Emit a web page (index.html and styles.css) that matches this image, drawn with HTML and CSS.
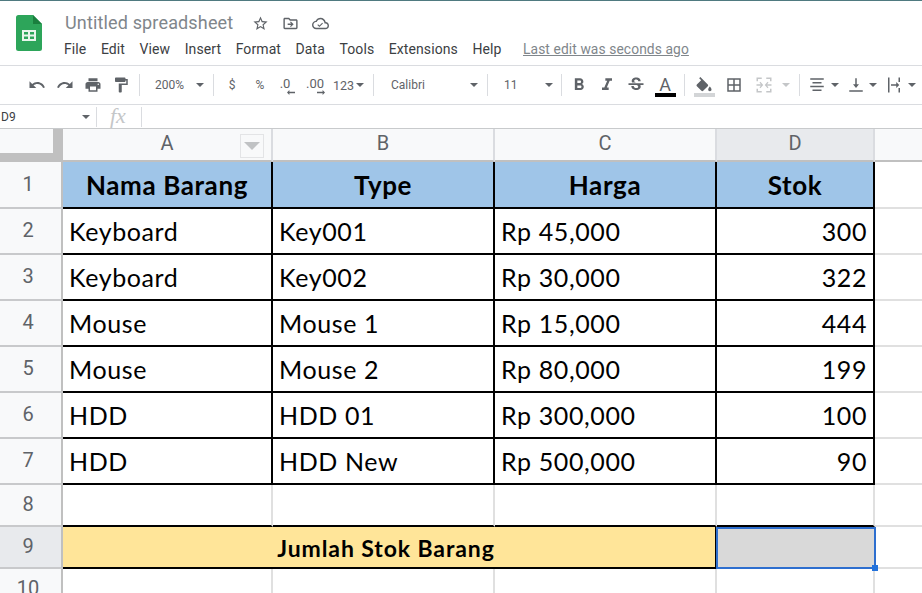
FILE: index.html
```html
<!DOCTYPE html>
<html lang="en">
<head>
<meta charset="utf-8">
<title>Untitled spreadsheet</title>
<link rel="stylesheet" href="styles.css">
</head>
<body>
<div class="app">
  <header class="topbar">
    <svg class="logo" viewBox="0 0 26 36"><path fill="#2da55a" d="M2.500 0H17l9 9v24.500a2.500 2.500 0 0 1-2.500 2.500h-21A2.500 2.500 0 0 1 0 33.500V2.500A2.500 2.500 0 0 1 2.500 0z"/><path fill="#1a7f3e" d="M17 0l9 9h-9z"/><path fill="#e8f5ec" d="M6 15h14v11H6zm2 2v2.500h4V17zm6 0v2.500h4V17zm-6 4.500V24h4v-2.500zm6 0V24h4v-2.500z" fill-rule="evenodd"/></svg>
    <div class="titles">
      <div class="title-row">
        <span class="doc-title">Untitled spreadsheet</span>
        <svg class="ticon first" viewBox="0 0 24 24"><path d="M22 9.240l-7.190-.62L12 2 9.190 8.630 2 9.240l5.460 4.730L5.820 21 12 17.270 18.180 21l-1.630-7.030L22 9.240zM12 15.400l-3.760 2.270 1-4.280-3.320-2.880 4.380-.38L12 6.100l1.710 4.040 4.380.38-3.320 2.880 1 4.280L12 15.400z"/></svg>
        <svg class="ticon" viewBox="0 0 24 24"><path d="M20 6h-8l-2-2H4c-1.100 0-2 .9-2 2v12c0 1.100.9 2 2 2h16c1.100 0 2-.9 2-2V8c0-1.100-.9-2-2-2zm0 12H4V6h5.170l2 2H20v10z"/><path d="M12.500 9l-1.200 1.200 1.800 1.800H8v2h5.100l-1.800 1.800 1.200 1.200 4-4z"/></svg>
        <svg class="ticon" viewBox="0 0 24 24"><path d="M19.350 10.040C18.670 6.590 15.640 4 12 4 9.110 4 6.600 5.640 5.350 8.040 2.340 8.360 0 10.910 0 14c0 3.310 2.690 6 6 6h13c2.760 0 5-2.240 5-5 0-2.640-2.050-4.780-4.650-4.960zM19 18H6c-2.210 0-4-1.790-4-4 0-2.050 1.530-3.760 3.560-3.970l1.070-.11.5-.95C8.080 7.140 9.940 6 12 6c2.620 0 4.880 1.860 5.390 4.430l.3 1.500 1.530.11c1.560.1 2.780 1.410 2.780 2.960 0 1.650-1.350 3-3 3zm-8.500-3.200l-1.900-1.900-1.100 1.100 3 3 5-5-1.100-1.100z"/></svg>
      </div>
      <nav class="menu">
        <span>File</span><span>Edit</span><span>View</span><span>Insert</span><span>Format</span><span>Data</span><span>Tools</span><span>Extensions</span><span>Help</span>
        <span class="last-edit">Last edit was seconds ago</span>
      </nav>
    </div>
  </header>

  <div class="toolbar">
    <div class="tb w28"><svg class="ic" viewBox="0 0 24 24"><path d="M12.500 8c-2.650 0-5.050.99-6.900 2.600L2 7v9h9l-3.620-3.620c1.390-1.160 3.160-1.880 5.120-1.880 3.540 0 6.550 2.310 7.600 5.500l2.370-.78C21.080 11.030 17.150 8 12.500 8z"/></svg></div>
    <div class="tb w28"><svg class="ic" viewBox="0 0 24 24"><path d="M18.400 10.600C16.550 8.990 14.150 8 11.500 8c-4.650 0-8.580 3.030-9.960 7.220L3.900 16c1.050-3.190 4.050-5.500 7.600-5.500 1.950 0 3.730.72 5.120 1.880L13 16h9V7l-3.600 3.600z"/></svg></div>
    <div class="tb w28"><svg class="ic" viewBox="0 0 24 24"><path d="M19 8H5c-1.660 0-3 1.340-3 3v6h4v4h12v-4h4v-6c0-1.660-1.340-3-3-3zm-3 11H8v-5h8v5zm3-7c-.55 0-1-.45-1-1s.45-1 1-1 1 .45 1 1-.45 1-1 1zm-1-9H6v4h12V3z"/></svg></div>
    <div class="tb w28"><svg class="ic" viewBox="0 0 24 24"><path d="M18 4V3c0-.55-.45-1-1-1H5c-.55 0-1 .45-1 1v4c0 .55.45 1 1 1h12c.55 0 1-.45 1-1V6h1v4H9v11c0 .55.45 1 1 1h2c.55 0 1-.45 1-1v-9h8V4h-3z"/></svg></div>
    <div class="sep w8"></div>
    <div class="tb w47 label pl12">200%</div>
    <div class="tb w19"><i class="caret"></i></div>
    <div class="sep w9"></div>
    <div class="tb w28 label">$</div>
    <div class="tb w28 label">%</div>
    <div class="tb w22 label stack"><b class="dec">.0</b><svg class="arr" viewBox="0 0 10 6"><path d="M0 3l3-3v2h7v2H3v2z"/></svg></div>
    <div class="tb w38 label stack"><b class="dec">.00</b><svg class="arr" viewBox="0 0 10 6"><path d="M10 3L7 0v2H0v2h7v2z"/></svg></div>
    <div class="tb w21 label num">123</div>
    <div class="tb w10"><i class="caret"></i></div>
    <div class="sep w16"></div>
    <div class="tb w84 label pl10">Calibri</div>
    <div class="tb w18"><i class="caret"></i></div>
    <div class="sep w8"></div>
    <div class="tb w49 label pl13">11</div>
    <div class="tb w17"><i class="caret"></i></div>
    <div class="sep w8"></div>
    <div class="tb w28"><svg class="ic big" viewBox="0 0 24 24"><path d="M15.600 10.790c.97-.67 1.650-1.770 1.650-2.790 0-2.260-1.750-4-4-4H7v14h7.040c2.090 0 3.710-1.700 3.710-3.790 0-1.520-.86-2.820-2.150-3.420zM10 6.500h3c.83 0 1.500.67 1.500 1.500s-.67 1.500-1.500 1.500h-3v-3zm3.500 9H10v-3h3.500c.83 0 1.500.67 1.500 1.500s-.67 1.500-1.500 1.500z"/></svg></div>
    <div class="tb w28"><svg class="ic big" viewBox="0 0 24 24"><path d="M10 4v3h2.210l-3.420 8H6v3h8v-3h-2.210l3.420-8H18V4z"/></svg></div>
    <div class="tb w30"><svg class="ic big" viewBox="0 0 24 24"><path d="M7.240 8.750c-.26-.48-.39-1.030-.39-1.670 0-.61.13-1.160.4-1.670.26-.5.63-.93 1.110-1.290.48-.35 1.050-.63 1.700-.83.66-.19 1.390-.29 2.180-.29.81 0 1.540.11 2.210.34.66.22 1.230.54 1.690.94.47.4.83.88 1.080 1.430.25.55.38 1.150.38 1.810h-3.010c0-.31-.05-.59-.15-.85-.09-.27-.24-.49-.44-.68-.2-.19-.45-.33-.75-.44-.3-.1-.66-.16-1.060-.16-.39 0-.74.04-1.030.13-.29.09-.53.21-.72.36-.19.16-.34.34-.44.55-.1.21-.15.43-.15.66 0 .48.25.88.74 1.210.38.25.77.48 1.410.7H7.390c-.05-.08-.11-.17-.15-.25zM21 12v-2H3v2h9.620c.18.07.4.14.55.2.37.17.66.34.87.51.21.17.35.36.43.57.07.2.11.43.11.69 0 .23-.05.45-.14.66-.09.2-.23.38-.42.53-.19.15-.42.26-.71.35-.29.08-.63.13-1.010.13-.43 0-.83-.04-1.180-.13s-.66-.23-.91-.42c-.25-.19-.45-.44-.59-.75-.14-.31-.25-.76-.25-1.210H6.400c0 .55.08 1.130.24 1.580.16.45.37.85.65 1.210.28.35.6.66.98.92.37.26.78.48 1.220.65.44.17.9.3 1.380.39.48.08.96.13 1.440.13.8 0 1.530-.09 2.180-.28s1.210-.45 1.670-.79c.46-.34.82-.77 1.070-1.270s.38-1.070.38-1.710c0-.6-.1-1.140-.31-1.610-.05-.11-.11-.23-.17-.33H21z"/></svg></div>
    <div class="tb w28 color-a"><span class="a-letter">A</span><i class="a-bar"></i></div>
    <div class="sep w11"></div>
    <div class="tb w28 color-a fill-wrap"><svg class="ic fill" viewBox="0 0 24 24"><path d="M16.560 8.940L7.620 0 6.210 1.410l2.380 2.380-5.150 5.150c-.59.59-.59 1.540 0 2.120l5.500 5.500c.29.29.68.44 1.060.44s.77-.15 1.060-.44l5.500-5.500c.59-.58.59-1.530 0-2.120z"/><path d="M19 11.500s-2 2.170-2 3.500c0 1.100.9 2 2 2s2-.9 2-2c0-1.330-2-3.500-2-3.500z"/></svg><i class="fill-bar"></i></div>
    <div class="tb w32"><svg class="ic" viewBox="0 0 24 24"><path d="M3 3v18h18V3H3zm8 16H5v-6h6v6zm0-8H5V5h6v6zm8 8h-6v-6h6v6zm0-8h-6V5h6v6z"/></svg></div>
    <div class="tb w28"><svg class="ic off" viewBox="0 0 24 24"><path d="M2 2h7v2H4v3H2zm13 0h7v5h-2V4h-5zM2 17h2v3h5v2H2zm18 0h2v5h-7v-2h5zM2 11h6l-2-2 1.200-1.200L11 12l-3.800 4.200L6 15l2-2H2zm20 0h-6l2-2-1.200-1.200L13 12l3.800 4.200L18 15l-2-2h6z"/></svg></div>
    <div class="tb w16"><i class="caret off"></i></div>
    <div class="sep w10"></div>
    <div class="tb w26"><svg class="ic" viewBox="0 0 24 24"><path d="M3 3h18v2H3zm3 5h12v2H6zm-3 5h18v2H3zm3 5h12v2H6z"/></svg></div>
    <div class="tb w9"><i class="caret"></i></div>
    <div class="tb w26 ml4"><svg class="ic" viewBox="0 0 24 24"><path d="M3 19h18v2H3zM11 3h2v8h3l-4 5-4-5h3z"/></svg></div>
    <div class="tb w8"><i class="caret"></i></div>
    <div class="tb w27 ml3"><svg class="ic" viewBox="0 0 24 24"><path d="M4 2h2v20H4zm14 0h2v6h-2zm0 14h2v6h-2zM8 11h7V8l4 4-4 4v-3H8z"/></svg></div>
    <div class="tb w10"><i class="caret"></i></div>
  </div>

  <div class="formula-bar">
    <div class="namebox"><span>D9</span><i class="caret"></i></div>
    <div class="fx">fx</div>
    <div class="formula-input"></div>
  </div>

  <main class="grid">
    <div class="corner"><div class="corner-inner"></div></div>
    <div class="colhead filtered">A<span class="filter"><i></i></span></div>
    <div class="colhead">B</div>
    <div class="colhead">C</div>
    <div class="colhead active">D</div>
    <div class="colhead"></div>

    <div class="rowhead">1</div>
    <div class="cell head">Nama Barang</div><div class="cell head">Type</div><div class="cell head">Harga</div><div class="cell head">Stok</div><div class="rest"></div>

    <div class="rowhead">2</div>
    <div class="cell">Keyboard</div><div class="cell">Key001</div><div class="cell">Rp 45,000</div><div class="cell right">300</div><div class="rest"></div>

    <div class="rowhead">3</div>
    <div class="cell">Keyboard</div><div class="cell">Key002</div><div class="cell">Rp 30,000</div><div class="cell right">322</div><div class="rest"></div>

    <div class="rowhead">4</div>
    <div class="cell">Mouse</div><div class="cell">Mouse 1</div><div class="cell">Rp 15,000</div><div class="cell right">444</div><div class="rest"></div>

    <div class="rowhead">5</div>
    <div class="cell">Mouse</div><div class="cell">Mouse 2</div><div class="cell">Rp 80,000</div><div class="cell right">199</div><div class="rest"></div>

    <div class="rowhead">6</div>
    <div class="cell">HDD</div><div class="cell">HDD 01</div><div class="cell">Rp 300,000</div><div class="cell right">100</div><div class="rest"></div>

    <div class="rowhead">7</div>
    <div class="cell">HDD</div><div class="cell">HDD New</div><div class="cell">Rp 500,000</div><div class="cell right">90</div><div class="rest"></div>

    <div class="rowhead">8</div>
    <div class="blank under"></div><div class="blank under"></div><div class="blank under"></div><div class="blank under"></div><div class="rest"></div>

    <div class="rowhead active">9</div>
    <div class="total">Jumlah Stok Barang</div>
    <div class="selected"><i class="handle"></i></div><div class="rest"></div>

    <div class="rowhead">10</div>
    <div class="blank"></div><div class="blank"></div><div class="blank"></div><div class="blank"></div><div class="rest"></div>
  </main>
</div>
</body>
</html>
```
FILE: styles.css
```css
* { box-sizing: border-box; }
html, body { margin: 0; height: 100%; overflow: hidden; background: #fff; }
.app { width: 922px; height: 593px; overflow: hidden; font-family: Roboto, "Liberation Sans", sans-serif; color: #3c4043; border-top: 1px solid #4f7a80; }

/* top bar */
.topbar { height: 65px; display: flex; border-bottom: 1px solid #dadce0; }
.logo { width: 26px; height: 36px; margin: 14px 0 0 16px; flex: none; }
.titles { margin-left: 23px; }
.title-row { display: flex; align-items: center; height: 20px; margin-top: 12px; }
.doc-title { font-size: 18px; color: #80868b; line-height: 20px; letter-spacing: .15px; }
.ticon { width: 17px; height: 17px; fill: #5f6368; margin-left: 13px; flex: none; }
.ticon.first { margin-left: 19px; }
.menu { display: flex; margin-top: 7px; margin-left: -1px; font-size: 14px; line-height: 18px; color: #3c4043; gap: 14.500px; white-space: nowrap; letter-spacing: .1px; }
.last-edit { margin-left: 7px; color: #80868b; text-decoration: underline; font-size: 13.800px; }

/* toolbar */
.toolbar { height: 39px; padding-left: 23px; display: flex; align-items: center; border-bottom: 1px solid #dadce0; }
.tb { height: 28px; display: flex; align-items: center; justify-content: center; flex: none; position: relative; }
.w8 { width: 8px; } .w9 { width: 9px; } .w10 { width: 10px; } .w11 { width: 11px; } .w16 { width: 16px; }
.w17 { width: 17px; } .w18 { width: 18px; } .w19 { width: 19px; } .w21 { width: 21px; } .w22 { width: 22px; }
.w26 { width: 26px; } .w27 { width: 27px; } .w28 { width: 28px; } .w30 { width: 30px; } .w32 { width: 32px; }
.w38 { width: 38px; } .w47 { width: 47px; } .w49 { width: 49px; } .w84 { width: 84px; }
.ml3 { margin-left: 3px; } .ml4 { margin-left: 4px; }
.ic { width: 18px; height: 18px; fill: #5f6368; }
.ic.big { width: 20px; height: 20px; }
.ic.off { fill: #c4c6c8; }
.label { font-size: 12px; color: #5f6368; justify-content: flex-start; }
.w28.label, .w22.label, .w38.label { justify-content: center; }
.pl10 { padding-left: 10px; } .pl12 { padding-left: 12px; } .pl13 { padding-left: 13px; }
.num { font-size: 12.500px; margin-left: -1px; margin-right: 1px; }
.sep { height: 22px; flex: none; display: flex; justify-content: center; }
.sep::before { content: ""; width: 1px; background: #dadce0; }
.caret { width: 0; height: 0; border-left: 4px solid transparent; border-right: 4px solid transparent; border-top: 4px solid #5f6368; display: block; flex: none; }
.caret.off { border-top-color: #c4c6c8; }
.label.stack { flex-direction: column; justify-content: flex-start; padding-top: 7px; }
.dec { font-weight: 400; font-size: 13px; line-height: 12px; }
.arr { width: 8px; height: 5px; fill: #5f6368; margin-left: 12px; }
.color-a { flex-direction: column; }
.a-letter { font-size: 18px; line-height: 17px; color: #5f6368; margin-top: 2px; }
.a-bar { width: 21px; height: 4px; background: #000; }
.fill-wrap { padding-top: 4px; }
.ic.fill { width: 20px; height: 20px; }
.fill-bar { width: 21px; height: 4px; background: #d3d5d7; margin-top: -4px; }

/* formula bar */
.formula-bar { height: 24px; display: flex; align-items: center; border-bottom: 1px solid #c8cacc; }
.namebox { width: 97px; height: 20px; padding: 0 6px 0 1px; display: flex; justify-content: space-between; align-items: center; font-size: 12px; color: #3c4043; border-right: 1px solid #dadce0; }
.fx { width: 45px; height: 20px; padding-left: 13px; font: italic 22px/18px "Liberation Serif", serif; color: #c4c6c8; border-right: 1px solid #dadce0; }
.formula-input { flex: 1; }

/* grid */
.grid { display: grid; grid-template-columns: 63px 210px 222px 222px 158px 1fr; grid-template-rows: 33px 47px repeat(6, 46px) 42px 42px 42px; }
.corner { background: #f8f9fa; border-right: 2px solid #c0c0c0; border-bottom: 2px solid #c0c0c0; }
.corner-inner { box-sizing: content-box; width: 53px; height: 24px; border-right: 8px solid #c0c0c0; border-bottom: 7px solid #c0c0c0; }
.colhead { background: #f8f9fa; border-right: 2px solid #dadce0; border-bottom: 2px solid #c0c0c0; color: #5f6368; font-size: 20px; display: flex; align-items: center; justify-content: center; padding-bottom: 4px; position: relative; }
.colhead:nth-child(6) { border-right: 0; }
.colhead.active, .rowhead.active { background: #e8eaed; }
.filter { position: absolute; left: 177px; top: 5px; width: 24px; height: 24px; border: 1px solid #e3e4e6; display: flex; align-items: center; justify-content: center; }
.filter i { width: 0; height: 0; border-left: 8px solid transparent; border-right: 8px solid transparent; border-top: 8px solid #c0c2c4; }
.rowhead { background: #f8f9fa; border-right: 2px solid #c0c0c0; border-bottom: 2px solid #c8c9cb; color: #5f6368; font-size: 20px; display: flex; align-items: center; justify-content: center; padding: 0 5px 2px 0; }
.cell { border-right: 2px solid #000; border-bottom: 2px solid #000; font-family: Lato, "Liberation Sans", sans-serif; font-size: 25px; letter-spacing: .6px; color: #000; padding: 0 6px; display: flex; align-items: center; white-space: nowrap; }
.cell.head { background: #9fc5e8; font-weight: 700; font-size: 26px; justify-content: center; }
.cell.right { justify-content: flex-end; }
.blank { border-right: 2px solid #e0e0e0; }
.blank.under { border-bottom: 2px solid #000; }
.rest { border-bottom: 2px solid #e0e0e0; }
.total { grid-column: span 3; background: #ffe599; border-right: 2px solid #000; border-bottom: 2px solid #000; font-family: Lato, "Liberation Sans", sans-serif; font-weight: 700; font-size: 23px; letter-spacing: .9px; color: #000; display: flex; align-items: center; justify-content: center; padding: 1px 6px 0 0; }
.selected { background: #d9d9d9; border: 2px solid #2e6fcf; margin-left: -1px; margin-right: -1px; position: relative; }
.handle { position: absolute; right: -4px; bottom: -4px; width: 6px; height: 6px; background: #2272dc; }
```
